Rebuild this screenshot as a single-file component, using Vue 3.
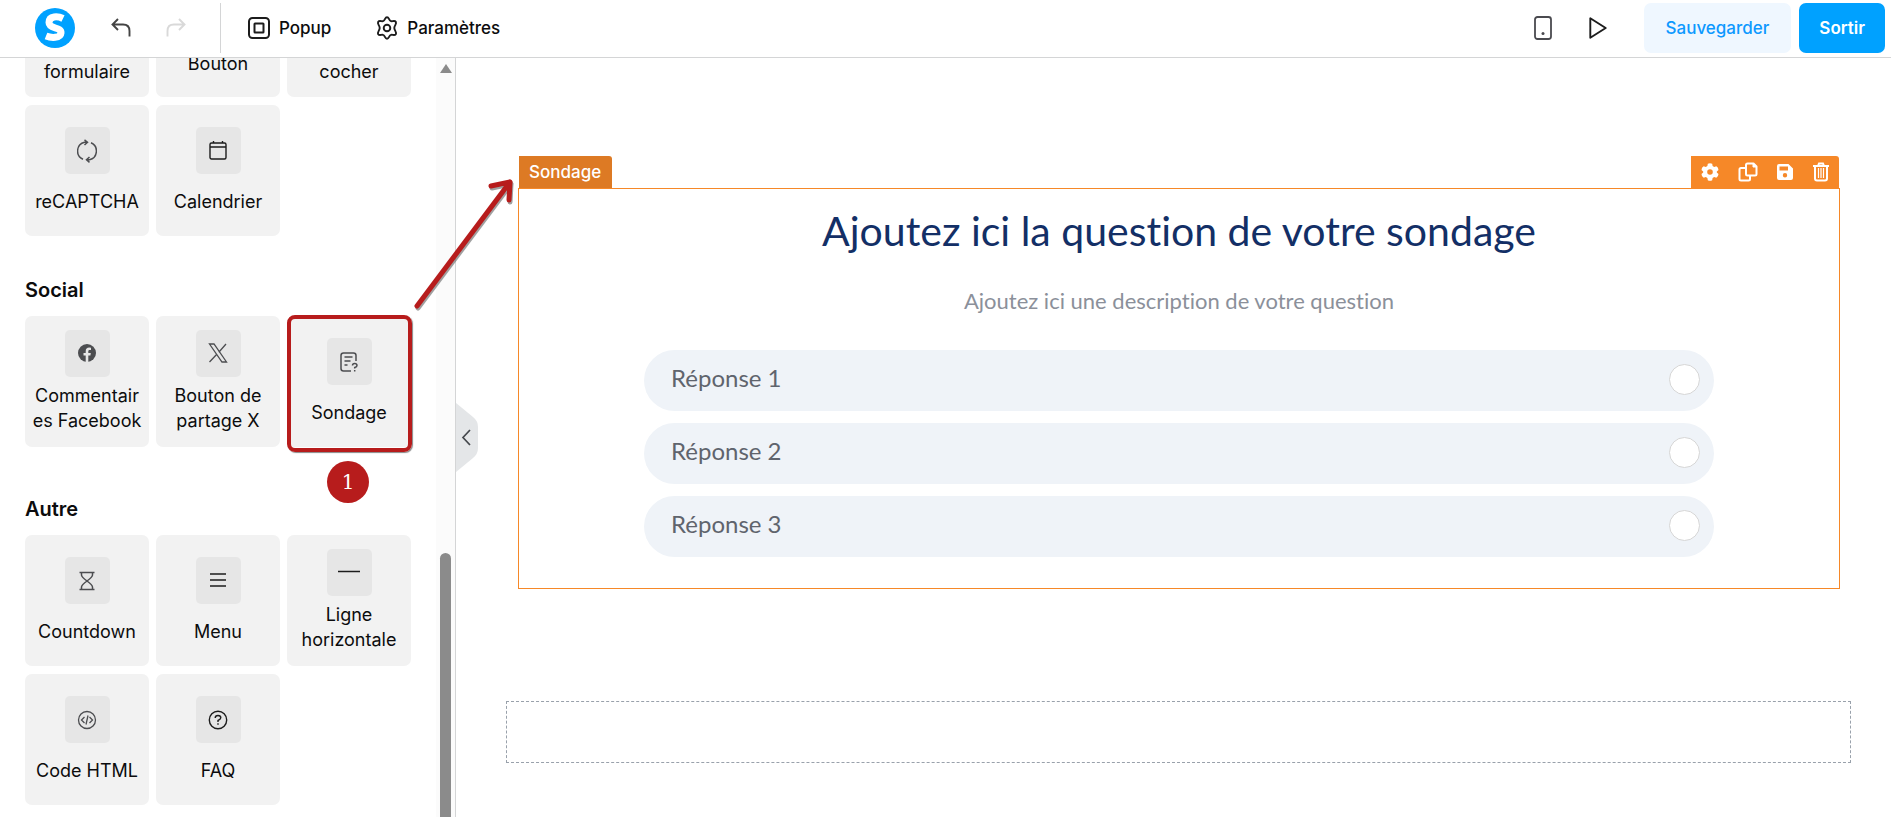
<script setup>
import { ref } from 'vue'

const topCards = [
  { label: 'formulaire', low: true },
  { label: 'Bouton', low: false },
  { label: 'cocher', low: true },
]

const sections = [
  {
    title: '',
    cards: [
      { label: 'reCAPTCHA', icon: 'refresh' },
      { label: 'Calendrier', icon: 'calendar' },
    ],
  },
  {
    title: 'Social',
    cards: [
      { label: 'Commentaires Facebook', icon: 'facebook' },
      { label: 'Bouton de partage X', icon: 'x' },
      { label: 'Sondage', icon: 'poll', step: 1 },
    ],
  },
  {
    title: 'Autre',
    cards: [
      { label: 'Countdown', icon: 'hourglass' },
      { label: 'Menu', icon: 'menu' },
      { label: 'Ligne horizontale', icon: 'line' },
      { label: 'Code HTML', icon: 'code' },
      { label: 'FAQ', icon: 'faq' },
    ],
  },
]

const answers = ['Réponse 1', 'Réponse 2', 'Réponse 3']
const picked = ref('')
</script>

<template>
  <div class="editor">
    <!-- TOP BAR -->
    <header class="topbar">
      <a href="#" class="logo" aria-label="Accueil">
        <svg width="40" height="40" viewBox="0 0 40 40">
          <circle cx="20" cy="20" r="20" fill="#00a1ff" />
          <path d="M28 10.500C23 8 14 7.500 14 14.500C14 21.500 26.500 18.500 26 25C25.500 30.500 16 30 11 28" fill="none" stroke="#fff" stroke-width="7" />
        </svg>
      </a>
      <button class="icon-btn undo" aria-label="Annuler">
        <svg width="20" height="20" viewBox="0 0 20 20" fill="none" stroke="#444" stroke-width="1.900">
          <path d="M7 1L1.500 6.500L7 12M1.500 6.500H12Q18.500 6.500 18.500 13V18.500" />
        </svg>
      </button>
      <button class="icon-btn redo" aria-label="Rétablir" disabled>
        <svg width="20" height="20" viewBox="0 0 20 20" fill="none" stroke="#d9d9d9" stroke-width="1.900">
          <path d="M13 1L18.500 6.500L13 12M18.500 6.500H8Q1.500 6.500 1.500 13V18.500" />
        </svg>
      </button>
      <nav class="tabs">
        <button class="tab">
          <svg width="22" height="22" viewBox="0 0 22 22" fill="none" stroke="#1c1c1c" stroke-width="2">
            <rect x="1" y="1" width="20" height="20" rx="3.500" />
            <rect x="6.500" y="6.500" width="9" height="9" rx="0.500" />
          </svg>
          Popup
        </button>
        <button class="tab">
          <svg width="22" height="24" viewBox="0 0 22 24" fill="none" stroke="#1c1c1c" stroke-width="1.900" stroke-linejoin="round">
            <path d="M11 1.200C13 1.200 13 4.300 14.600 5C16.200 5.800 18.600 3.900 19.800 5.800C21 8 18.300 9.400 18.300 12C18.300 14.600 21 16 19.800 18.200C18.600 20.100 16.200 18.200 14.600 19C13 19.700 13 22.800 11 22.800C9 22.800 9 19.700 7.400 19C5.800 18.200 3.400 20.100 2.200 18.200C1 16 3.700 14.600 3.700 12C3.700 9.400 1 8 2.200 5.800C3.400 3.900 5.800 5.800 7.400 5C9 4.300 9 1.200 11 1.200Z" />
            <circle cx="11" cy="12" r="3.300" />
          </svg>
          Paramètres
        </button>
      </nav>
      <div class="actions">
        <button class="icon-btn phone" aria-label="Mobile">
          <svg width="18" height="24" viewBox="0 0 18 24" fill="none" stroke="#4a4a4f" stroke-width="1.800">
            <rect x="1" y="1" width="16" height="22" rx="2.500" />
            <circle cx="9" cy="17.500" r="1.500" fill="#4a4a4f" stroke="none" />
          </svg>
        </button>
        <button class="icon-btn play" aria-label="Aperçu">
          <svg width="18" height="22" viewBox="0 0 18 22" fill="none" stroke="#1c1c1c" stroke-width="1.900" stroke-linejoin="round">
            <path d="M1.300 1.200V20.800L16.700 11Z" />
          </svg>
        </button>
        <button class="btn save">Sauvegarder</button>
        <button class="btn exit">Sortir</button>
      </div>
    </header>

    <div class="workspace">
      <!-- ELEMENTS -->
      <aside class="sidebar">
        <div class="elements">
          <div class="cards cut">
            <button v-for="card in topCards" :key="card.label" class="card" :class="{ low: card.low }">
              {{ card.label }}
            </button>
          </div>
          <section v-for="section in sections" :key="section.title" class="section" :class="section.title.toLowerCase()">
            <h2 v-if="section.title">{{ section.title }}</h2>
            <div class="cards">
              <button v-for="card in section.cards" :key="card.label" class="card" :class="{ marked: card.step }">
                <span class="thumb">
                  <svg v-if="card.icon === 'refresh'" width="20" height="24" viewBox="0 0 20 24" fill="none" stroke="#4c4d50" stroke-width="1.500">
                    <path d="M6 20.200A9 9 0 0 1 7.500 3.200H10M7.500 0.800L10.500 3.200L7.500 6M14 3.800A9 9 0 0 1 12.500 20.800H10M12.500 18L9.500 20.800L12.500 23.300" />
                  </svg>
                  <svg v-else-if="card.icon === 'calendar'" width="18" height="20" viewBox="0 0 18 20" fill="none" stroke="#1c1c1c" stroke-width="1.400">
                    <rect x="1" y="2" width="16" height="16" rx="1.500" />
                    <path d="M1 6H17M4.500 0V2M13.500 0V2" />
                  </svg>
                  <svg v-else-if="card.icon === 'facebook'" width="18" height="18" viewBox="0 0 18 18">
                    <circle cx="9" cy="9" r="9" fill="#4c4d50" />
                    <path d="M7.700 18V11.500H5.500V9H7.700V7.200C7.700 4.900 9 3.600 11.200 3.600L13 3.800V5.900H11.700C10.600 5.900 10.300 6.500 10.300 7.300V9H12.800L12.400 11.500H10.300V18Z" fill="#e6e6e6" />
                  </svg>
                  <svg v-else-if="card.icon === 'x'" width="20" height="20" viewBox="0 0 20 20" fill="none" stroke="#4c4d50" stroke-width="1.300">
                    <path d="M1.500 1H6L18.500 19H14ZM18 1L10.800 9.200M8.800 11.200L1.500 19" />
                  </svg>
                  <svg v-else-if="card.icon === 'poll'" width="18" height="20" viewBox="0 0 18 20" fill="none" stroke="#4c4d50" stroke-width="1.500">
                    <path d="M11 19H3.500Q1 19 1 16.500V3.500Q1 1 3.500 1H13.500Q16 1 16 3.500V9M4.500 5H12.500M4.500 9H10.500M4.500 13H7.500M12.500 13.500Q12.500 11.500 14.700 11.500T17 13.500Q17 15 14.700 15.500V16.500M14.700 18V19.500" />
                  </svg>
                  <svg v-else-if="card.icon === 'hourglass'" width="16" height="20" viewBox="0 0 16 20" fill="none" stroke="#4c4d50" stroke-width="1.500">
                    <path d="M0.500 1.500H15.500M0.500 18.500H15.500M2.500 1.500V4Q2.500 6 8 10Q13.500 14 13.500 16V18.500M13.500 1.500V4Q13.500 6 8 10Q2.500 14 2.500 16V18.500" />
                  </svg>
                  <svg v-else-if="card.icon === 'menu'" width="18" height="18" viewBox="0 0 18 18" fill="none" stroke="#1c1c1c" stroke-width="1.500">
                    <path d="M1 2H17M1 8H17M1 14H17" />
                  </svg>
                  <svg v-else-if="card.icon === 'line'" width="24" height="4" viewBox="0 0 24 4">
                    <path d="M1 1.500H23" stroke="#1c1c1c" stroke-width="1.500" />
                  </svg>
                  <svg v-else-if="card.icon === 'code'" width="20" height="20" viewBox="0 0 20 20" fill="none" stroke="#4c4d50" stroke-width="1.300">
                    <circle cx="10" cy="10" r="8.500" />
                    <path d="M7.500 7L4.500 10L7.500 13M12.500 7L15.500 10L12.500 13M11 5.500L9 14.500" />
                  </svg>
                  <svg v-else width="20" height="20" viewBox="0 0 20 20" fill="none" stroke="#1c1c1c" stroke-width="1.400">
                    <circle cx="10" cy="10" r="8.700" />
                    <path d="M7.200 8Q7.200 5.500 10 5.500T12.800 7.800Q12.800 9.300 10 10.500V12M10 13.200V14.800" />
                  </svg>
                </span>
                <span class="label">{{ card.label }}</span>
                <span v-if="card.step" class="step">{{ card.step }}</span>
              </button>
            </div>
          </section>
        </div>
        <div class="track">
          <span class="track-up"></span>
          <span class="thumb-bar"></span>
        </div>
      </aside>

      <!-- CANVAS -->
      <main class="canvas">
        <button class="collapse" aria-label="Replier">
          <svg width="22" height="70" viewBox="0 0 22 70">
            <path d="M0 0L17 14Q22 18 22 24V45Q22 51 17 55L0 69Z" fill="#e4e6e8" />
            <path d="M14 27L7 34.500L14 42" fill="none" stroke="#44474c" stroke-width="1.700" />
          </svg>
        </button>

        <div class="block">
          <div class="block-bar">
            <span class="tag">Sondage</span>
            <div class="tools">
              <button aria-label="Réglages">
                <svg width="18" height="18" viewBox="0 0 18 18">
                  <path d="M6.800 0.800Q9 -0.500 11.200 0.800L11.600 3L13.200 3.900L15.300 3.200Q17.500 4.500 17.500 7L15.800 8.500V9.500L17.500 11Q17.500 13.500 15.300 14.800L13.200 14.100L11.600 15L11.200 17.200Q9 18.500 6.800 17.200L6.400 15L4.800 14.100L2.700 14.800Q0.500 13.500 0.500 11L2.200 9.500V8.500L0.500 7Q0.500 4.500 2.700 3.200L4.800 3.900L6.400 3ZM9 6.200A2.800 2.800 0 1 0 9 11.800A2.800 2.800 0 1 0 9 6.200Z" fill="#fff" fill-rule="evenodd" />
                </svg>
              </button>
              <button aria-label="Dupliquer">
                <svg width="20" height="20" viewBox="0 0 20 20" fill="none" stroke="#fff" stroke-width="2" stroke-linejoin="round">
                  <path d="M9.500 1.500H15.500L18.500 4.500V12Q18.500 13.500 17 13.500H9.500Q8 13.500 8 12V3Q8 1.500 9.500 1.500ZM8 6H3Q1.500 6 1.500 7.500V17Q1.500 18.500 3 18.500H10.500Q12 18.500 12 17V13.500" />
                  <path d="M15 1.500V5H18.500Z" fill="#fff" stroke-width="1" />
                </svg>
              </button>
              <button aria-label="Enregistrer">
                <svg width="18" height="18" viewBox="0 0 18 18">
                  <path d="M3 1H12.500L17 5.500V15Q17 17 15 17H3Q1 17 1 15V3Q1 1 3 1ZM3.500 3.500V7.500H12V3.500ZM9 10A2.200 2.200 0 1 0 9 14.400A2.200 2.200 0 1 0 9 10Z" fill="#fff" fill-rule="evenodd" />
                </svg>
              </button>
              <button aria-label="Supprimer">
                <svg width="16" height="20" viewBox="0 0 16 20" fill="none" stroke="#fff" stroke-width="2">
                  <path d="M0 4H16M5 4L6 1.500H10L11 4M2 4V16.500Q2 18.500 4 18.500H12Q14 18.500 14 16.500V4" />
                  <path d="M5.500 6V16M8 6V16M10.500 6V16" stroke-width="1.200" />
                </svg>
              </button>
            </div>
          </div>
          <form class="poll" @submit.prevent>
            <h1>Ajoutez ici la question de votre sondage</h1>
            <p>Ajoutez ici une description de votre question</p>
            <div class="answers">
              <label v-for="answer in answers" :key="answer" class="answer">
                <span>{{ answer }}</span>
                <input v-model="picked" type="radio" name="poll" :value="answer" />
              </label>
            </div>
          </form>
        </div>

        <div class="dropzone"></div>
      </main>

      <!-- arrow from the element to the block -->
      <svg class="arrow" width="110" height="140" viewBox="0 0 110 140" fill="none" stroke-width="5" stroke-linecap="round" stroke-linejoin="round">
        <path d="M9 132L102 8M83 12L102 8L101 26" stroke="#777" stroke-opacity="0.700" />
        <path d="M8 130L101 6M82 10L101 6L100 24" stroke="#b71c1c" />
      </svg>
    </div>
  </div>
</template>

<style>
body {
  margin: 0;
  overflow: hidden;
}
</style>

<style scoped>
.editor {
  display: flex;
  flex-direction: column;
  height: 100vh;
  background: #fff;
  color: #0c0c0d;
  font-family: Inter, "Liberation Sans", sans-serif;
  font-size: 17px;
}

button {
  padding: 0;
  border: none;
  background: none;
  color: inherit;
  font: inherit;
  cursor: pointer;
}

svg {
  display: block;
}

/* TOP BAR */
.topbar {
  display: flex;
  align-items: center;
  box-sizing: border-box;
  height: 58px;
  flex: none;
  padding: 0 6px 2px 35px;
  border-bottom: 1px solid #d4d5d6;
}

.undo {
  margin-left: 36px;
}

.redo {
  margin-left: 35px;
}

.tabs {
  display: flex;
  align-items: center;
  gap: 45px;
  height: 50px;
  margin-left: 34px;
  padding-left: 27px;
  border-left: 1px solid #d4d5d6;
}

.tab {
  display: flex;
  align-items: center;
  gap: 9px;
  font-weight: 500;
}

.actions {
  display: flex;
  align-items: center;
  margin-left: auto;
}

.play {
  margin: 0 37px;
}

.btn {
  height: 50px;
  padding: 0 20px;
  border-radius: 7px;
  font-weight: 500;
}

.save {
  padding: 0 22px;
  background: #eff7ff;
  color: #0d99ff;
}

.exit {
  margin-left: 8px;
  background: #00a1ff;
  color: #fff;
  font-weight: 600;
}

/* SIDEBAR */
.workspace {
  position: relative;
  display: flex;
  flex: 1;
  min-height: 0;
}

.sidebar {
  display: flex;
  flex: none;
  width: 455px;
  border-right: 1px solid #d4d5d6;
  overflow: hidden;
}

.elements {
  flex: 1;
  min-width: 0;
  padding: 0 25px;
}

.section {
  margin-top: 8px;
}

.section.social {
  margin-top: 42px;
}

.section.autre {
  margin-top: 50px;
}

h2 {
  margin: 0 0 14px;
  font-size: 20px;
  font-weight: 600;
  line-height: 24px;
}

.cards {
  display: grid;
  grid-template-columns: repeat(3, minmax(0, 1fr));
  gap: 8px 7px;
}

.card {
  position: relative;
  display: flex;
  flex-direction: column;
  align-items: center;
  justify-content: space-evenly;
  box-sizing: border-box;
  height: 131px;
  padding: 7px;
  border-radius: 7px;
  background: #f2f2f2;
  font-size: 18px;
  line-height: 25px;
}

.cut .card {
  height: 39px;
  justify-content: flex-end;
  padding: 0 7px 21px;
  border-radius: 0 0 7px 7px;
}

.cut .card.low {
  padding-bottom: 13px;
}

.thumb {
  display: flex;
  align-items: center;
  justify-content: center;
  width: 45px;
  height: 47px;
  border-radius: 5px;
  background: #e6e6e6;
}

.label {
  max-width: 100%;
  overflow-wrap: break-word;
}

.marked::after {
  content: '';
  position: absolute;
  inset: -1px -1px -5px 0;
  border: 4px solid #b71c1c;
  border-radius: 8px;
  box-shadow: 1px 1px 1px #888;
}

.step {
  position: absolute;
  top: 145px;
  left: 40px;
  width: 42px;
  height: 42px;
  border-radius: 50%;
  background: #b71c1c;
  color: #fff;
  font: 20px/42px "DejaVu Serif", serif;
}

.track {
  display: flex;
  flex-direction: column;
  align-items: center;
  width: 19px;
  background: #fbfbfb;
}

.track-up {
  flex: none;
  margin: 6px 0 480px;
  border: 6px solid transparent;
  border-top: none;
  border-bottom: 9px solid #8b8b8b;
}

.thumb-bar {
  flex: 1;
  width: 11px;
  border-radius: 6px 6px 0 0;
  background: #8b8b8b;
}

/* CANVAS */
.canvas {
  position: relative;
  flex: 1;
  min-width: 0;
  padding: 98px 40px 0 50px;
}

.collapse {
  position: absolute;
  top: 345px;
  left: 0;
}

.block {
  margin: 0 11px 0 12px;
}

.block-bar {
  display: flex;
  justify-content: space-between;
  height: 32px;
  padding: 0 1px;
}

.tag {
  padding: 0 11px 0 10px;
  border-radius: 0 3px 0 0;
  background: #dd7a24;
  color: #fff;
  font-weight: 500;
  line-height: 32px;
}

.tools {
  display: flex;
  align-items: center;
  justify-content: space-between;
  box-sizing: border-box;
  width: 148px;
  padding: 0 10px;
  border-radius: 0 3px 0 0;
  background: #f68828;
}

.poll {
  padding: 18px 24px 31px;
  border: 1px solid #f68828;
  font-family: Lato, "Open Sans", sans-serif;
  font-variant-ligatures: none;
  text-align: center;
}

h1 {
  margin: 0;
  color: #132f66;
  font-size: 41px;
  font-weight: 400;
  line-height: 48px;
}

.poll p {
  margin: 30px 0 33px;
  color: #8b909a;
  font-size: 22px;
  line-height: 32px;
}

.answers {
  display: flex;
  flex-direction: column;
  gap: 12px;
  max-width: 1070px;
  margin: 0 auto;
}

.answer {
  display: flex;
  align-items: center;
  justify-content: space-between;
  box-sizing: border-box;
  height: 61px;
  padding: 0 14px 2px 27px;
  border-radius: 31px;
  background: #eff3f8;
  color: #5f646d;
  font-size: 24px;
}

.answer span {
  padding-bottom: 4px;
}

.answer input {
  appearance: none;
  width: 31px;
  height: 31px;
  margin: 0;
  border: 1px solid #d6d6d6;
  border-radius: 50%;
  background: #fff;
}

.answer input:checked {
  background: #00a1ff;
}

.dropzone {
  height: 60px;
  margin-top: 112px;
  border: 1px dashed #99a1ab;
}

.arrow {
  position: absolute;
  top: 118px;
  left: 409px;
  pointer-events: none;
}
</style>
